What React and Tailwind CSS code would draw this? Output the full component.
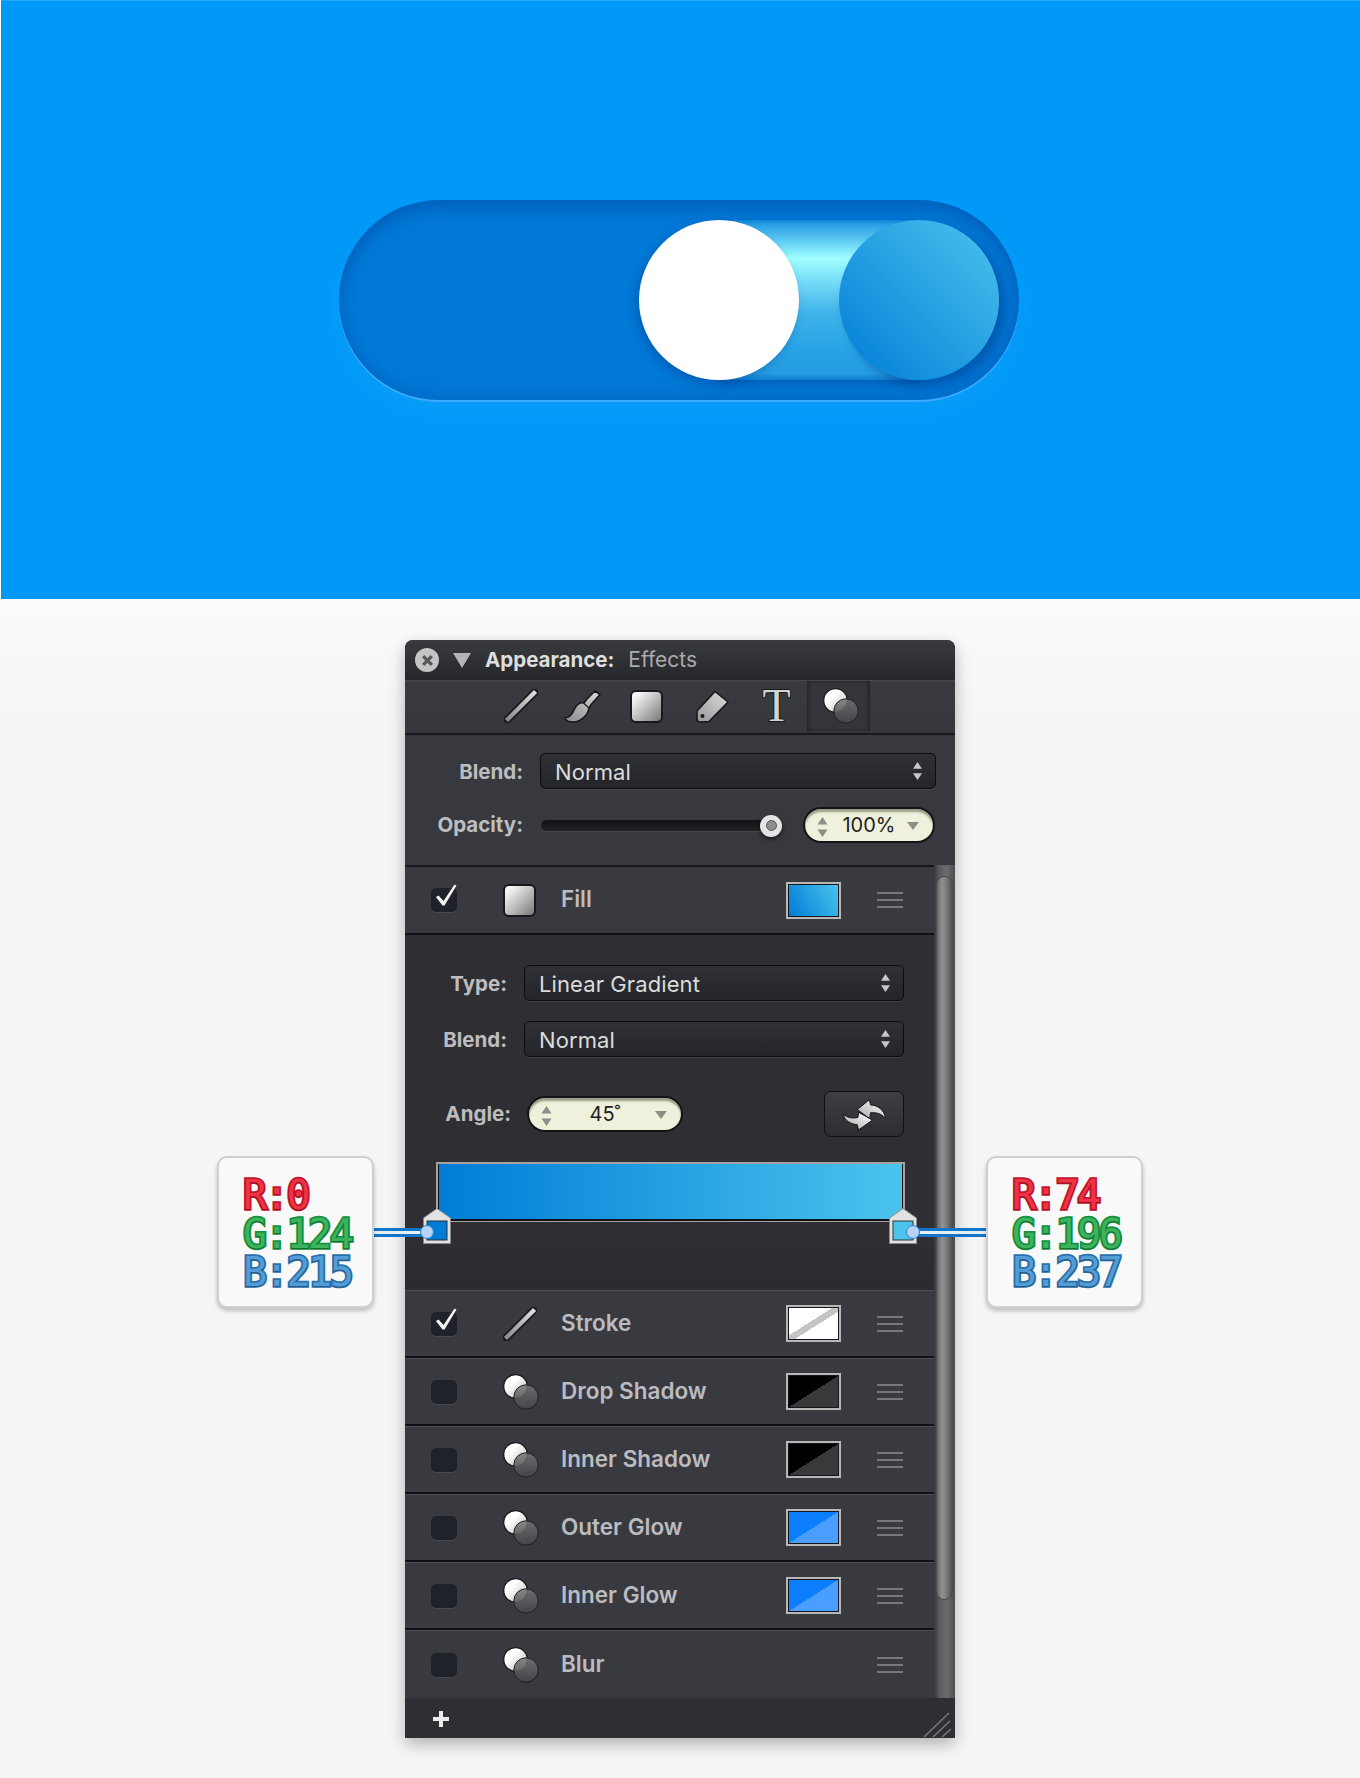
import React from "react";

const sans = "font-['Inter','Liberation_Sans',sans-serif]";

const LineIcon = ({ className }) => (
  <svg viewBox="0 0 34 34" className={className}>
    <defs>
      <linearGradient id="lineGrad" x1="0" y1="1" x2="1" y2="0">
        <stop offset="0" stopColor="#8e8e90" />
        <stop offset="1" stopColor="#dcdcdc" />
      </linearGradient>
    </defs>
    <path d="M3.5 30.5 L30.5 3.5" stroke="#17181a" strokeWidth="7.5" strokeLinecap="round" />
    <path d="M4 30 L30 4" stroke="url(#lineGrad)" strokeWidth="4.4" strokeLinecap="square" />
  </svg>
);

const BrushIcon = () => (
  <svg viewBox="0 0 37 33" className="w-[37px] h-[33px]">
    <defs>
      <linearGradient id="brushGrad" x1="0" y1="1" x2="1" y2="0">
        <stop offset="0" stopColor="#8a8a8c" />
        <stop offset="1" stopColor="#dadada" />
      </linearGradient>
    </defs>
    <path
      d="M0.8 28 C6 28 9 23 11 18 C13 14 17 12 20 13 L23 9 L31 1 L36 4.5 L27.5 14 L25 18 C24 25 17 32 9 32 C5 32 2 31 0.8 28 Z"
      fill="url(#brushGrad)"
      stroke="#17181a"
      strokeWidth="1.6"
      strokeLinejoin="round"
    />
    <path d="M19.5 13 L25.5 18.5" stroke="#17181a" strokeWidth="1.2" />
  </svg>
);

const TagIcon = () => (
  <svg viewBox="0 0 33 33" className="w-[33px] h-[33px]">
    <defs>
      <linearGradient id="tagGrad" x1="0" y1="1" x2="1" y2="0">
        <stop offset="0" stopColor="#969698" />
        <stop offset="1" stopColor="#dedede" />
      </linearGradient>
    </defs>
    <path
      d="M1 21 L19 1.5 L32 12 L13 31.5 L4 32 C2 32 1 31 1 29 Z"
      fill="url(#tagGrad)"
      stroke="#17181a"
      strokeWidth="1.6"
      strokeLinejoin="round"
    />
    <circle cx="6.5" cy="26" r="2" fill="#1c1c1e" />
  </svg>
);

const CirclesIcon = ({ className }) => (
  <svg viewBox="0 0 36 36" className={className}>
    <defs>
      <linearGradient id="whiteGrad" x1="0" y1="0" x2="1" y2="1">
        <stop offset="0.35" stopColor="#ffffff" />
        <stop offset="1" stopColor="#b5b5b5" />
      </linearGradient>
      <linearGradient id="darkGrad" x1="0" y1="0" x2="0" y2="1">
        <stop offset="0" stopColor="#767678" stopOpacity="0.82" />
        <stop offset="1" stopColor="#434345" stopOpacity="0.96" />
      </linearGradient>
    </defs>
    <circle cx="12.5" cy="12.5" r="11.8" fill="url(#whiteGrad)" stroke="#17181a" strokeWidth="1.3" />
    <circle cx="23" cy="23" r="12.2" fill="url(#darkGrad)" stroke="#1f1f21" strokeWidth="1" />
  </svg>
);

const GradSquare = ({ className }) => (
  <div
    className={`rounded-[6px] border-2 border-[#17181a] bg-[linear-gradient(135deg,#f4f4f4_15%,#7f7f7f_95%)] ${className}`}
  />
);

const UpDown = ({ color = "#c8c8c8", className = "" }) => (
  <svg viewBox="0 0 10 20" className={`w-[9px] h-[18px] ${className}`}>
    <path d="M5 0 L10 7.5 L0 7.5 Z M0 12.5 L10 12.5 L5 20 Z" fill={color} />
  </svg>
);

const Select = ({ value }) => (
  <div className="flex-1 h-[36px] flex items-center justify-between pl-[14px] pr-[13px] rounded-[5px] border border-[#0c0c0e] bg-[linear-gradient(#303136,#242529)] shadow-[0_1px_0_rgba(255,255,255,0.1)]">
    <span className={`${sans} pt-[2px] text-[22px] tracking-[0.1px] text-[#dcdcdc]`}>{value}</span>
    <UpDown />
  </div>
);

const Stepper = ({ value, className }) => (
  <div
    className={`relative h-[36px] flex items-center justify-center rounded-full border-2 border-[#141416] bg-[#eff1dc] shadow-[inset_0_3px_2px_rgba(90,90,70,0.55)] ${className}`}
  >
    <UpDown color="#8e8e88" className="absolute left-[12px] top-[8px] w-[11px] h-[20px]" />
    <span className={`${sans} text-[20px] text-[#1e1e1e]`}>{value}</span>
    <span className="absolute right-[14px] top-[13px] w-0 h-0 border-x-[6px] border-x-transparent border-t-[8px] border-t-[#8e8e88]" />
  </div>
);

const Checkbox = ({ checked }) => (
  <div className="relative w-[26px] h-[24px] rounded-[5px] bg-[#20222a] shadow-[0_1px_0_rgba(255,255,255,0.08)]">
    {checked && (
      <svg viewBox="0 0 26 22" className="absolute left-0 top-[-4px] w-[26px] h-[22px]">
        <path d="M5 13 L7.5 11.5 L12.5 17 L23.5 0.5 L25.5 1.5 L13.5 21.5 L11.5 21.5 Z" fill="#f4f4f4" />
      </svg>
    )}
  </div>
);

const Hamburger = () => (
  <div className="w-[26px] flex flex-col gap-[5px]">
    <span className="h-[2px] bg-[#77787c]" />
    <span className="h-[2px] bg-[#77787c]" />
    <span className="h-[2px] bg-[#77787c]" />
  </div>
);

const Swatch = ({ fill }) => (
  <div className="w-[55px] h-[37px] border-[2px] border-[#b8b8b8] bg-[#111]">
    <div className={`w-full h-full border border-[#15161a] ${fill}`} />
  </div>
);

const swatches = {
  fill: "bg-[linear-gradient(60deg,#007cd7,#4ac4ed)]",
  stroke: "bg-[linear-gradient(to_top_left,#ffffff_44%,#c4c4c4_44%,#c4c4c4_56%,#ffffff_56%)]",
  shadow: "bg-[linear-gradient(to_bottom_right,#000000_50%,#39393b_50%)]",
  glow: "bg-[linear-gradient(to_bottom_right,#0a7eff_50%,#4a9eff_50%)]",
};

const labelText = `${sans} ml-[19px] mb-[2px] flex-1 text-[22.5px] font-semibold text-[#bcbcc0]`;
const formLabel = `${sans} pt-[2px] text-right text-[20.5px] font-bold text-[#bdbdbf]`;

const Row = ({ icon, label, checked, swatch }) => (
  <div className="h-[68px] flex items-center pl-[26px] bg-[#393a40] border-t border-[#4e4f54] border-b-2 border-b-[#111113] last:border-b-0">
    <Checkbox checked={checked} />
    <div className="w-[39px] ml-[46px] flex justify-start">{icon}</div>
    <span className={labelText}>{label}</span>
    {swatch && <Swatch fill={swatch} />}
    <div className="ml-[36px] mr-[31px]">
      <Hamburger />
    </div>
  </div>
);

const effects = [
  { label: "Drop Shadow", swatch: swatches.shadow },
  { label: "Inner Shadow", swatch: swatches.shadow },
  { label: "Outer Glow", swatch: swatches.glow },
  { label: "Inner Glow", swatch: swatches.glow },
  { label: "Blur" },
];

const rgbText =
  "font-['DejaVu_Sans_Mono',monospace] text-[40px] leading-[38.5px] tracking-[-2.4px] [paint-order:stroke_fill] whitespace-pre [text-shadow:0_1px_1px_rgba(0,0,0,0.25)]";

const Callout = ({ r, g, b, className }) => (
  <div
    className={`absolute top-[516px] w-[157px] h-[152px] pt-[18px] pl-[24px] rounded-[10px] border-2 border-[#cfcfcf] bg-[#f9f9f9] shadow-[0_3px_4px_rgba(0,0,0,0.22)] ${className}`}
  >
    <div className={`${rgbText} text-[#ee3344] [-webkit-text-stroke:3.5px_#c3142c]`}>R:{r}</div>
    <div className={`${rgbText} text-[#3cb45e] [-webkit-text-stroke:3.5px_#159040]`}>G:{g}</div>
    <div className={`${rgbText} text-[#539dd6] [-webkit-text-stroke:3.5px_#2a70ab]`}>B:{b}</div>
  </div>
);

const Handle = ({ color, className }) => (
  <svg viewBox="0 0 28 36" className={`absolute top-[44px] w-[28px] h-[36px] ${className}`}>
    <path d="M0.5 10 L14 0.5 L27.5 10 L27.5 35.5 L0.5 35.5 Z" fill="#e2e2e2" stroke="#8a8a8a" />
    <rect x="4" y="13" width="20" height="19" fill={color} stroke="#303033" />
  </svg>
);

const Leader = ({ className, dot }) => (
  <>
    <div
      className={`absolute top-[588px] h-[9px] border-y-[3px] border-[#1275c8] bg-[#e4f0fb] ${className}`}
    />
    <div
      className={`absolute top-[585px] w-[14px] h-[14px] rounded-full border border-[#2b7fd0] bg-[#b5d3f8] ${dot}`}
    />
  </>
);

export default function App() {
  return (
    <div className="w-[1360px] h-[1778px] bg-[#f5f5f5] overflow-hidden">
      {/* Toggle hero */}
      <div className="h-[599px] pl-px bg-white">
        <div className="h-full flex items-center justify-center pr-[3px] pb-[1px] bg-[#0099f8] border-t border-[#26a6f8]">
          <div className="relative w-[680px] h-[200px] rounded-full bg-[#0079d7] shadow-[inset_0_10px_16px_rgba(0,70,160,0.45),inset_0_-8px_14px_rgba(0,70,160,0.2),0_2px_0_#3caaff,0_10px_22px_rgba(60,180,255,0.18)]">
            <div className="absolute left-[380px] top-[20px] w-[200px] h-[160px] bg-[linear-gradient(#0e84d8_0%,#2a9fe6_3%,#64d0f4_14%,#a0ffff_24%,#78dcf8_38%,#3fb3ea_58%,#28a4e6_80%,#249de2_96%,#0d7fd0_100%)] shadow-[0_5px_8px_rgba(0,50,130,0.3)]" />
            <div className="absolute left-[500px] top-[20px] w-[160px] h-[160px] rounded-full bg-[linear-gradient(45deg,#007cd7,#4ac4ed)] shadow-[6px_6px_10px_rgba(0,50,130,0.45)]" />
            <div className="absolute left-[300px] top-[20px] w-[160px] h-[160px] rounded-full bg-white shadow-[-3px_4px_10px_rgba(0,50,130,0.35)]" />
          </div>
        </div>
      </div>

      {/* Appearance panel */}
      <div className="flex justify-center pt-[41px] bg-[linear-gradient(#fbfbfb,#f5f5f5_120px)]">
        <div className="relative w-[550px] h-[1098px]">
          <div className="w-full h-full flex flex-col rounded-t-[8px] overflow-hidden bg-[#2f2f33] shadow-[0_6px_16px_rgba(0,0,0,0.28)]">
            {/* Title bar */}
            <div className="h-[40px] shrink-0 flex items-center pl-[10px] bg-[linear-gradient(#3a3b3f,#25262a)]">
              <div className="w-[24px] h-[24px] rounded-full bg-[#c4c4c4] flex items-center justify-center">
                <svg viewBox="0 0 12 12" className="w-[13px] h-[13px]">
                  <path d="M2 2 L10 10 M10 2 L2 10" stroke="#55565a" strokeWidth="3" />
                </svg>
              </div>
              <span className="ml-[14px] w-0 h-0 border-x-[9px] border-x-transparent border-t-[15px] border-t-[#b4b4b4]" />
              <span className={`${sans} ml-[14px] text-[20.5px] font-bold text-[#dedede]`}>Appearance:</span>
              <span className={`${sans} ml-[14px] text-[21px] text-[#ababab]`}>Effects</span>
            </div>

            {/* Toolbar */}
            <div className="h-[55px] shrink-0 flex items-center pl-[99px] pb-[2px] bg-[linear-gradient(#3a3b40,#36373c)] border-t border-[#46474b] border-b-2 border-b-[#17181a]">
              <LineIcon className="w-[34px] h-[34px]" />
              <div className="ml-[26px]">
                <BrushIcon />
              </div>
              <GradSquare className="ml-[29px] w-[33px] h-[33px]" />
              <div className="ml-[33px]">
                <TagIcon />
              </div>
              <span className="ml-[31px] w-[33px] text-center font-['Liberation_Serif',serif] text-[46px] leading-[40px] text-[#d4d4d4] [-webkit-text-stroke:2px_#17181a] [paint-order:stroke_fill]">
                T
              </span>
              <div className="ml-[14px] w-[63px] h-full flex items-center justify-center pl-[4px] bg-[#34353a] shadow-[inset_2px_0_3px_rgba(0,0,0,0.3),inset_-2px_0_3px_rgba(0,0,0,0.3)]">
                <CirclesIcon className="w-[36px] h-[36px]" />
              </div>
            </div>

            {/* Blend and opacity */}
            <div className="h-[130px] shrink-0 flex flex-col pt-[18px] pr-[19px] gap-[18px] bg-[#38393e]">
              <div className="flex items-center">
                <span className={`${formLabel} w-[118px]`}>Blend:</span>
                <div className="ml-[17px] flex-1 flex">
                  <Select value="Normal" />
                </div>
              </div>
              <div className="flex items-center">
                <span className={`${sans} w-[118px] text-right text-[20.5px] font-bold text-[#bdbdbf]`}>Opacity:</span>
                <div className="relative ml-[18px] w-[230px] h-[11px] rounded-full bg-[linear-gradient(#111113,#232326)] shadow-[0_1px_0_rgba(255,255,255,0.08)]">
                  <div className="absolute right-[-11px] top-[-5px] w-[22px] h-[22px] rounded-full bg-[#e4e4e4] shadow-[0_2px_4px_rgba(0,0,0,0.6)] flex items-center justify-center">
                    <div className="w-[11px] h-[11px] rounded-full border border-[#55565a] bg-[#8e8e90]" />
                  </div>
                </div>
                <Stepper value="100%" className="ml-[32px] w-[132px]" />
              </div>
            </div>

            {/* List and scrollbar */}
            <div className="flex-1 flex">
              <div className="w-[529px] flex flex-col">
                <div className="h-[70px] flex items-center pl-[26px] bg-[#393a40] border-t-2 border-[#17181a] border-b-2 border-b-[#111113]">
                  <Checkbox checked />
                  <div className="w-[39px] ml-[46px]">
                    <GradSquare className="w-[33px] h-[33px]" />
                  </div>
                  <span className={labelText}>Fill</span>
                  <Swatch fill={swatches.fill} />
                  <div className="ml-[36px] mr-[31px]">
                    <Hamburger />
                  </div>
                </div>

                {/* Gradient settings */}
                <div className="h-[355px] flex flex-col pt-[30px] pr-[30px] bg-[linear-gradient(#2f2f33,#2f2f33_85%,#2b2c2f)]">
                  <div className="flex items-center">
                    <span className={`${formLabel} w-[102px]`}>Type:</span>
                    <div className="ml-[17px] flex-1 flex">
                      <Select value="Linear Gradient" />
                    </div>
                  </div>
                  <div className="mt-[20px] flex items-center">
                    <span className={`${formLabel} w-[102px]`}>Blend:</span>
                    <div className="ml-[17px] flex-1 flex">
                      <Select value="Normal" />
                    </div>
                  </div>
                  <div className="mt-[34px] flex items-center justify-between">
                    <div className="flex items-center">
                      <span className={`${sans} w-[106px] text-right text-[20.5px] font-bold text-[#bdbdbf]`}>Angle:</span>
                      <Stepper value="45˚" className="ml-[16px] w-[156px]" />
                    </div>
                    <div className="w-[80px] h-[46px] flex items-center justify-center rounded-[7px] border border-[#101012] bg-[linear-gradient(#3e3f44,#2d2e32)]">
                      <svg viewBox="90 35 140 100" className="w-[47px] h-[33px]">
                        <defs>
                          <linearGradient id="swapGrad" x1="0" y1="1" x2="1" y2="0">
                            <stop offset="0" stopColor="#a8a8a8" />
                            <stop offset="1" stopColor="#ffffff" />
                          </linearGradient>
                        </defs>
                        <path
                          d="M138 70 L175 40 L178 56 C200 56 220 72 224 96 C210 82 195 78 178 80 L176 98 Z"
                          fill="url(#swapGrad)"
                          stroke="#111"
                          strokeWidth="3"
                          strokeLinejoin="round"
                        />
                        <path
                          d="M184 102 L142 132 L138 116 C118 114 100 104 95 84 C108 94 122 98 140 94 L142 78 Z"
                          fill="url(#swapGrad)"
                          stroke="#111"
                          strokeWidth="3"
                          strokeLinejoin="round"
                        />
                      </svg>
                    </div>
                  </div>
                  <div className="relative mt-[25px] ml-[31px] mr-[-1px] w-[469px] h-[60px] border-2 border-b border-[#a3a3a3]">
                    <div className="w-full h-full border-x border-b-2 border-[#121214] bg-[linear-gradient(90deg,#007cd7,#4ac4ed)]" />
                    <Handle color="#007cd7" className="left-[-15px]" />
                    <Handle color="#4ac4ed" className="right-[-14px]" />
                  </div>
                </div>

                <Row icon={<LineIcon className="w-[34px] h-[34px]" />} label="Stroke" checked swatch={swatches.stroke} />
                {effects.map((item) => (
                  <Row
                    key={item.label}
                    icon={<CirclesIcon className="w-[36px] h-[36px]" />}
                    label={item.label}
                    swatch={item.swatch}
                  />
                ))}
              </div>

              {/* Scrollbar */}
              <div className="w-[21px] pt-[11px] pl-[2px] pr-[2px] bg-[linear-gradient(90deg,#36373a,#5a5b5d_25%,#6c6c6e_60%,#4c4d50)]">
                <div className="h-[724px] rounded-full border border-[#4a4a4c] bg-[linear-gradient(90deg,#66666a,#939393_35%,#747476_70%,#505052)]" />
              </div>
            </div>

            {/* Footer */}
            <div className="h-[42px] shrink-0 flex items-center justify-between pl-[28px] pr-[4px] bg-[#2f2f33]">
              <svg viewBox="0 0 16 16" className="w-[16px] h-[16px]">
                <path d="M8 0 V16 M0 8 H16" stroke="#ececec" strokeWidth="4" />
              </svg>
              <svg viewBox="0 0 28 26" className="w-[28px] h-[26px] mt-[12px]">
                <path d="M1 25 L26 1 M10 25 L27 9 M19 25 L28 17" stroke="#77787c" strokeWidth="1.6" />
              </svg>
            </div>
          </div>

          {/* Colour callouts */}
          <Leader className="left-[-32px] w-[54px]" dot="left-[15px]" />
          <Leader className="left-[508px] w-[74px]" dot="left-[501px]" />
          <Callout r="0" g="124" b="215" className="left-[-188px]" />
          <Callout r="74" g="196" b="237" className="left-[581px]" />
        </div>
      </div>
    </div>
  );
}
